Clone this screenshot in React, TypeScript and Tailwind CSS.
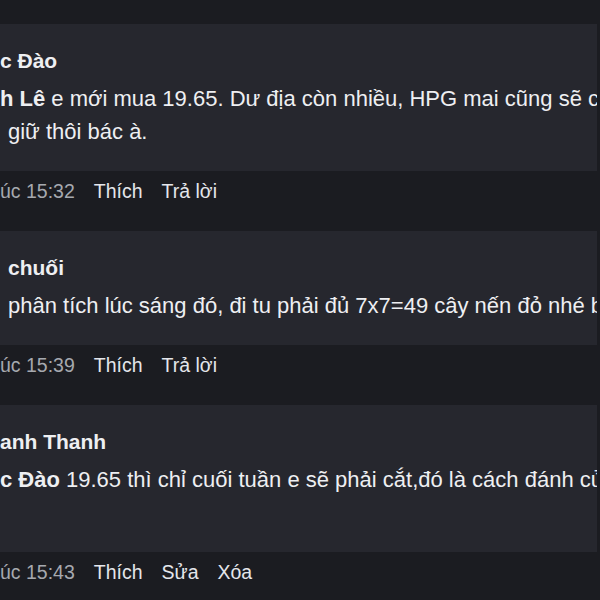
import type { ReactNode } from 'react';

type Comment = {
  name: string;
  nameIndent: number;
  lines: ReactNode[];
  lineIndent: number[];
  time: string;
  actions: string[];
};

const comments: Comment[] = [
  {
    name: 'c Đào',
    nameIndent: 0,
    lines: [
      <>
        <span className="font-bold">h Lê</span> e mới mua 19.65. Dư địa còn nhiều, HPG mai cũng sẽ có
      </>,
      'giữ thôi bác à.',
    ],
    lineIndent: [0, 8],
    time: 'úc 15:32',
    actions: ['Thích', 'Trả lời'],
  },
  {
    name: 'chuối',
    nameIndent: 8,
    lines: ['phân tích lúc sáng đó, đi tu phải đủ 7x7=49 cây nến đỏ nhé bác'],
    lineIndent: [8],
    time: 'úc 15:39',
    actions: ['Thích', 'Trả lời'],
  },
  {
    name: 'anh Thanh',
    nameIndent: 0,
    lines: [
      <>
        <span className="font-bold">c Đào</span> 19.65 thì chỉ cuối tuần e sẽ phải cắt,đó là cách đánh của
      </>,
      '\u00a0',
    ],
    lineIndent: [0, 0],
    time: 'úc 15:43',
    actions: ['Thích', 'Sửa', 'Xóa'],
  },
];

function CommentBlock({ c }: { c: Comment }) {
  return (
    <div>
      <div className="mr-[3px] overflow-hidden whitespace-nowrap bg-[#26272e] py-[23px]">
        <div
          className="text-[21px] font-bold leading-[28px]"
          style={{ paddingLeft: c.nameIndent }}
        >
          {c.name}
        </div>
        <div className="mt-[7px] text-[22px] leading-[33px]">
          {c.lines.map((line, i) => (
            <div key={i} style={{ paddingLeft: c.lineIndent[i] }}>
              {line}
            </div>
          ))}
        </div>
      </div>
      <div className="flex h-[60px] items-start gap-[19px] whitespace-nowrap pt-[8px] text-[19.5px] leading-[24px]">
        <span className="text-[#a6a9af]">{c.time}</span>
        {c.actions.map((a) => (
          <span key={a} className="text-[#e4e6eb]">
            {a}
          </span>
        ))}
      </div>
    </div>
  );
}

export default function App() {
  return (
    <div className="h-[600px] w-[600px] overflow-hidden bg-[#1b1c21] pt-6 font-['Liberation_Sans',Arial,sans-serif] text-[#eeeff2]">
      {comments.map((c, i) => (
        <CommentBlock key={i} c={c} />
      ))}
    </div>
  );
}
